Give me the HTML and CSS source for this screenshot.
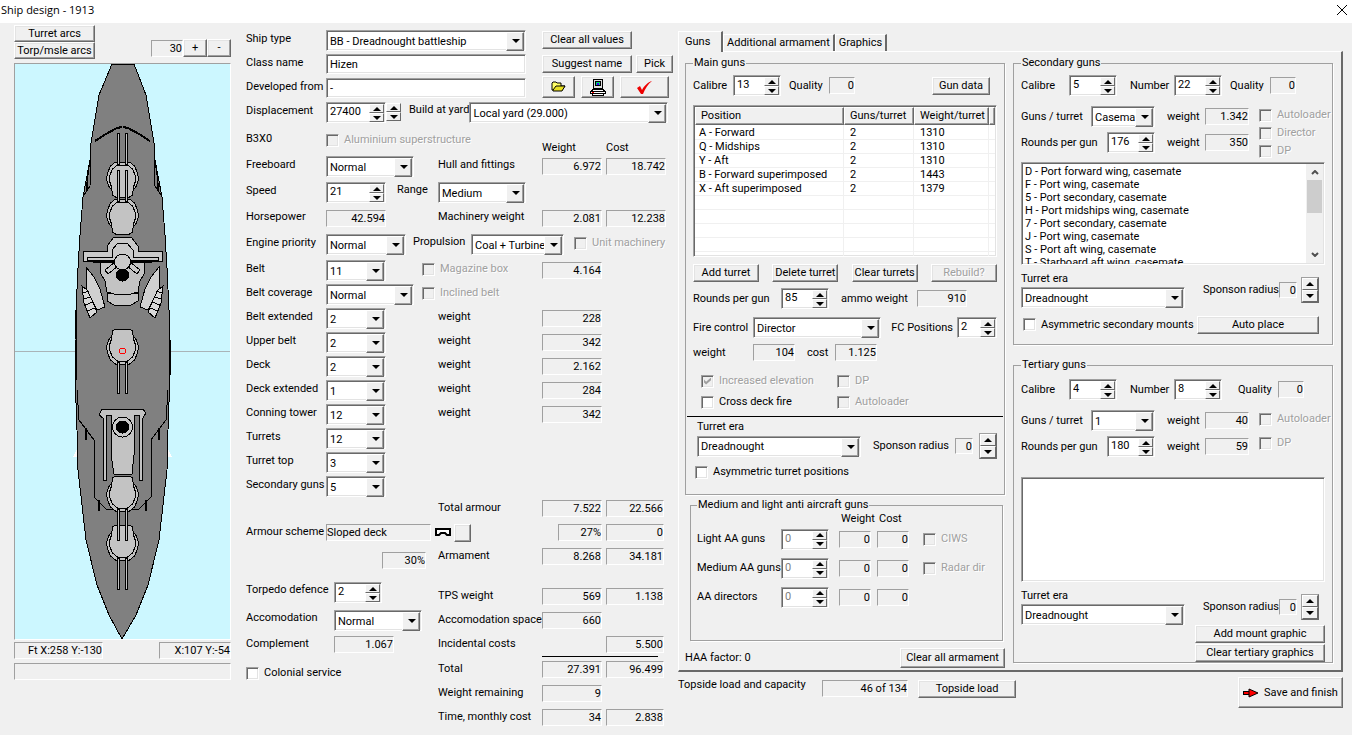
FILE: index.html
```html
<!DOCTYPE html>
<html lang="en">
<head>
    <meta charset="UTF-8">
    <meta name="viewport" content="width=device-width, initial-scale=1.0">
    <title>Ship design - 1913</title>
    <link rel="stylesheet" href="styles.css">
</head>
<body>
    <header class="titlebar">
        <h1>Ship design - 1913</h1>
        <button class="close" aria-label="Close"><svg width="12" height="12" viewBox="0 0 12 12"><path d="M1 1L11 11M11 1L1 11" stroke="#000" fill="none"/></svg></button>
    </header>

    <main class="workspace">
        <!-- Ship drawing -->
        <section class="ship">
            <div class="ship-tools">
                <div class="stack">
                    <button class="btn">Turret arcs</button>
                    <button class="btn">Torp/msle arcs</button>
                </div>
                <div class="zoom">
                    <output class="field">30</output>
                    <button class="btn">+</button>
                    <button class="btn">-</button>
                </div>
            </div>
            <svg class="canvas" viewBox="15 64 215 575" shape-rendering="crispEdges">
                <defs>
                    <g id="turret" stroke="#000" fill="#c3c3c3">
                        <path d="M-7 -13L7 -13L12 -9L15 -2L16 4L14 11L10 16L-10 16L-14 11L-16 4L-15 -2L-12 -9Z"/>
                        <path d="M-5 -10L5 -10L10 -6L13 1L13 6L11 12L10 20L7 22L-7 22L-10 20L-11 12L-13 6L-13 1L-10 -6Z"/>
                        <rect x="-5" y="-42" width="2" height="31"/>
                        <rect x="3" y="-42" width="2" height="31"/>
                    </g>
                    <g id="side" stroke="#000" fill="none">
                        <path d="M95 141L106 134L117 128L122 127" stroke-width="2"/>
                        <path d="M91 143L90 186L84 195M90 160L86 190M88 180L87 190"/>
                        <path d="M80 235L78 268M78 268L76 310M76 310L76 380M77 390L79 420L94 440L94 497L106 509L122 509" />
                        <path d="M86 428V440M99 500V511" stroke-width="2"/>
                        <path d="M86 267L94 277L100 289L105 307L97 310L86 290Z" fill="#d0d0d0"/>
                        <path d="M82 286L87 290L92 300L97 312L90 318L84 303Z" fill="#d8d8d8"/>
                        <path d="M83 293L89 291M83 299L91 297M85 305L93 302M87 311L95 308"/>
                    </g>
                </defs>
                <path d="M15 351H230" stroke="#a9b4b8"/>
                <path d="M73 457L77 449V457ZM172 457L168 449V457Z" fill="#fff"/>
                <path d="M112 64L99 95L91 143L90 160L83 197L80 235L78 268L76 310L75 340L75 375L77 430L78 470L86 540L97 585L109 615L122 639L136 615L148 585L159 540L167 470L168 430L170 375L170 340L169 310L167 268L165 235L162 197L155 160L154 143L146 95L134 64Z" fill="#808080" stroke="#000"/>
                <use href="#side"/>
                <use href="#side" transform="translate(245 0) scale(-1 1)"/>
                <use href="#turret" x="122.500" y="175"/>
                <use href="#turret" x="122.500" y="212"/>
                <g stroke="#000" fill="#cacaca">
                    <path d="M100 261L101 274L105 281L107 292L114 294H131L138 292L140 281L144 274L145 261Z" fill="#c3c3c3"/>
                    <path d="M107 293V301L114 305H131L138 301V293L131 294H114Z" fill="#c3c3c3"/>
                    <path d="M83 251H107V246L114 237H131L138 246V251H162V261H83Z"/>
                    <path d="M87 260V257H112V250L118 243H127L133 250V257H158V260Z"/>
                    <path d="M93 262H152" stroke-width="2"/>
                    <path d="M105 270L115 262L118 266L108 274ZM140 270L130 262L127 266L137 274Z"/>
                    <circle cx="122.500" cy="262" r="8"/>
                    <circle cx="122.500" cy="275" r="6" fill="#000"/>
                    <path d="M102 409H143L146 413L143 418H142V480H139V415H134V455L132 474H114L111 455V415H106V480H103V418L99 415Z" fill="#c3c3c3"/>
                    <circle cx="122.500" cy="427" r="10"/>
                    <circle cx="122.500" cy="427" r="6" fill="#000"/>
                </g>
                <use href="#turret" transform="translate(122.500 351) rotate(180)"/>
                <use href="#turret" transform="translate(122.500 547) rotate(180)"/>
                <use href="#turret" transform="translate(122.500 498) rotate(180)"/>
                <circle cx="122.500" cy="351" r="3" fill="none" stroke="#f00"/>
            </svg>
            <div class="coords">
                <output class="field">Ft X:258 Y:-130</output>
                <output class="field">X:107 Y:-54</output>
            </div>
            <output class="field message"></output>
        </section>

        <!-- General data -->
        <section class="data">
            <div class="specs">
                <label for="type">Ship type</label>
                <span class="combo wide"><select id="type"><option>BB - Dreadnought battleship</option></select></span>
                <div class="side-btns"><button class="btn w90">Clear all values</button></div>

                <label for="name">Class name</label>
                <input class="text wide" id="name" type="text" value="Hizen">
                <div class="side-btns"><button class="btn w90">Suggest name</button><button class="btn pick">Pick</button></div>

                <label for="from">Developed from</label>
                <input class="text wide" id="from" type="text" value="-">
                <div class="side-btns icons">
                    <button class="btn" aria-label="Open"><svg width="16" height="12" viewBox="0 0 16 12"><path d="M1 9V2L2 1H5L6 2H10V5H14L11 9Z" fill="#ffff66" stroke="#000"/><path d="M2 9L5 5H14L11 10H2Z" fill="#e8e020" stroke="#000"/></svg></button>
                    <button class="btn" aria-label="Print"><svg width="16" height="17" viewBox="0 0 16 17" shape-rendering="crispEdges"><path d="M3 0H13V10H3Z"/><path d="M4 1H12V9H4Z" fill="#ddd"/><path d="M5 2H11V7H5Z"/><path d="M6 3H10V6H6Z" fill="#00d070"/><path d="M7 4H9V6H7Z" fill="#40f"/><path d="M2 10H14L16 13V15H14V17H2V15H0V13Z"/><path d="M3 11H13V12H3ZM1 13H15V14H1ZM3 15H13V16H3Z" fill="#fff"/><path d="M2 13H4V14H2Z" fill="#f00"/></svg></button>
                    <button class="btn check" aria-label="Accept"><svg width="17" height="15" viewBox="0 0 17 15"><path d="M1 8L4 6L6 10C8 6 12 2 16 1C12 4 9 9 7 14H5Z" fill="#e00"/></svg></button>
                </div>

                <label for="disp">Displacement</label>
                <div class="line">
                    <span class="spin w60"><input id="disp" type="text" value="27400"><button aria-label="Up"></button><button aria-label="Down"></button></span>
                    <span class="updown"><button aria-label="Up"></button><button aria-label="Down"></button></span>
                    <label for="yard" class="gap8">Build at yard</label>
                    <span class="combo yard"><select id="yard"><option>Local yard (29.000)</option></select></span>
                </div>

                <span>B3X0</span>
                <label class="tick off two"><input type="checkbox" disabled>Aluminium superstructure</label>
                <span class="head">Weight</span><span class="head">Cost</span>

                <label for="free">Freeboard</label>
                <span class="combo w88"><select id="free"><option>Normal</option></select></span>
                <span>Hull and fittings</span><output class="field">6.972</output><output class="field">18.742</output>

                <label for="speed">Speed</label>
                <div class="line">
                    <span class="spin w60"><input id="speed" type="text" value="21"><button aria-label="Up"></button><button aria-label="Down"></button></span>
                    <label for="range" class="range">Range</label>
                    <span class="combo w88"><select id="range"><option>Medium</option></select></span>
                </div>

                <span>Horsepower</span><output class="field w60">42.594</output>
                <span>Machinery weight</span><output class="field">2.081</output><output class="field">12.238</output>

                <label for="engine">Engine priority</label>
                <div class="line">
                    <span class="combo w80"><select id="engine"><option>Normal</option></select></span>
                    <label for="prop" class="prop">Propulsion</label>
                    <span class="combo coal"><select id="prop"><option>Coal + Turbine</option></select></span>
                    <label class="tick off unit"><input type="checkbox" disabled>Unit machinery</label>
                </div>

                <label for="belt">Belt</label>
                <div class="line short">
                    <span class="combo w60"><select id="belt"><option>11</option></select></span>
                    <label class="tick off box"><input type="checkbox" disabled>Magazine box</label>
                </div>
                <output class="field">4.164</output><span></span>

                <label for="cover">Belt coverage</label>
                <div class="line">
                    <span class="combo w88"><select id="cover"><option>Normal</option></select></span>
                    <label class="tick off incl"><input type="checkbox" disabled>Inclined belt</label>
                </div>

                <label for="bext">Belt extended</label>
                <span class="combo w60"><select id="bext"><option>2</option></select></span>
                <span>weight</span><output class="field">228</output><span></span>
                <label for="upper">Upper belt</label>
                <span class="combo w60"><select id="upper"><option>2</option></select></span>
                <span>weight</span><output class="field">342</output><span></span>
                <label for="deck">Deck</label>
                <span class="combo w60"><select id="deck"><option>2</option></select></span>
                <span>weight</span><output class="field">2.162</output><span></span>
                <label for="dext">Deck extended</label>
                <span class="combo w60"><select id="dext"><option>1</option></select></span>
                <span>weight</span><output class="field">284</output><span></span>
                <label for="conn">Conning tower</label>
                <span class="combo w60"><select id="conn"><option>12</option></select></span>
                <span>weight</span><output class="field">342</output><span></span>
                <label for="turrets">Turrets</label>
                <div class="line"><span class="combo w60"><select id="turrets"><option>12</option></select></span></div>
                <label for="ttop">Turret top</label>
                <div class="line"><span class="combo w60"><select id="ttop"><option>3</option></select></span></div>
                <label for="secg">Secondary guns</label>
                <div class="line"><span class="combo w60"><select id="secg"><option>5</option></select></span></div>
            </div>

            <div class="lower">
                <div class="options">
                    <div class="line scheme">
                        <span class="cap">Armour scheme</span>
                        <output class="field left">Sloped deck</output>
                        <svg width="16" height="9" viewBox="0 0 16 9"><path d="M1 1H15V7H12L10 5H6L4 7H1Z" fill="#fff" stroke="#000" stroke-width="2"/></svg>
                        <button class="btn mini" aria-label="Change scheme"></button>
                    </div>
                    <div class="line percent"><output class="field">30%</output></div>
                    <div class="line">
                        <label class="cap88" for="torp">Torpedo defence</label>
                        <span class="spin"><input id="torp" type="text" value="2"><button aria-label="Up"></button><button aria-label="Down"></button></span>
                    </div>
                    <div class="line">
                        <label class="cap88" for="acc">Accomodation</label>
                        <span class="combo w88"><select id="acc"><option>Normal</option></select></span>
                    </div>
                    <div class="line">
                        <span class="cap88">Complement</span>
                        <output class="field w60">1.067</output>
                    </div>
                    <label class="tick"><input type="checkbox">Colonial service</label>
                </div>
                <div class="totals">
                    <div class="ledger">
                        <span>Total armour</span><output class="field">7.522</output><output class="field">22.566</output>
                        <span></span><output class="field narrow">27%</output><output class="field">0</output>
                        <span>Armament</span><output class="field">8.268</output><output class="field">34.181</output>
                        <div class="break"></div>
                        <span>TPS weight</span><output class="field">569</output><output class="field">1.138</output>
                        <span>Accomodation space</span><output class="field">660</output><span></span>
                        <span>Incidental costs</span><span></span><output class="field">5.500</output>
                    </div>
                    <hr>
                    <div class="ledger">
                        <span>Total</span><output class="field">27.391</output><output class="field">96.499</output>
                        <span>Weight remaining</span><output class="field">9</output><span></span>
                        <span>Time, monthly cost</span><output class="field">34</output><output class="field">2.838</output>
                    </div>
                </div>
            </div>
        </section>

        <!-- Armament -->
        <section class="arms">
            <nav class="tabs">
                <button class="tab active">Guns</button><button class="tab">Additional armament</button><button class="tab">Graphics</button>
            </nav>
            <div class="panel">
                <div class="col">
                    <fieldset class="main-guns">
                        <legend>Main guns</legend>
                        <div class="bar">
                            <label for="mcal" class="l40">Calibre</label>
                            <span class="spin"><input id="mcal" type="text" value="13"><button aria-label="Up"></button><button aria-label="Down"></button></span>
                            <span class="l40 gap8">Quality</span>
                            <output class="field w26">0</output>
                            <button class="btn w58 push gun-data">Gun data</button>
                        </div>
                        <div class="list grid-list">
                            <table>
                                <thead><tr><th>Position</th><th>Guns/turret</th><th>Weight/turret</th><th></th></tr></thead>
                                <tbody>
                                    <tr><td>A - Forward</td><td>2</td><td>1310</td><td></td></tr>
                                    <tr><td>Q - Midships</td><td>2</td><td>1310</td><td></td></tr>
                                    <tr><td>Y - Aft</td><td>2</td><td>1310</td><td></td></tr>
                                    <tr><td>B - Forward superimposed</td><td>2</td><td>1443</td><td></td></tr>
                                    <tr><td>X - Aft superimposed</td><td>2</td><td>1379</td><td></td></tr>
                                    <tr><td></td><td></td><td></td><td></td></tr>
                                    <tr><td></td><td></td><td></td><td></td></tr>
                                    <tr><td></td><td></td><td></td><td></td></tr>
                                    <tr><td></td><td></td><td></td><td></td></tr>
                                    <tr><td></td><td></td><td></td><td></td></tr>
                                </tbody>
                            </table>
                        </div>
                        <div class="btn-row">
                            <button class="btn">Add turret</button>
                            <button class="btn">Delete turret</button>
                            <button class="btn">Clear turrets</button>
                            <button class="btn" disabled>Rebuild?</button>
                        </div>
                        <div class="bar">
                            <label for="mrpg" class="l88">Rounds per gun</label>
                            <span class="spin"><input id="mrpg" type="text" value="85"><button aria-label="Up"></button><button aria-label="Down"></button></span>
                            <span class="ammo">ammo weight</span>
                            <output class="field w50">910</output>
                        </div>
                        <div class="bar tall">
                            <label for="fc" class="l60">Fire control</label>
                            <span class="combo w128"><select id="fc"><option>Director</option></select></span>
                            <label for="fcp" class="push">FC Positions</label>
                            <span class="spin w40"><input id="fcp" type="text" value="2"><button aria-label="Up"></button><button aria-label="Down"></button></span>
                        </div>
                        <div class="bar thin">
                            <span class="l60">weight</span><output class="field w42">104</output>
                            <span class="cost">cost</span><output class="field w42">1.125</output>
                        </div>
                        <div class="ticks">
                            <label class="tick off"><input type="checkbox" checked disabled>Increased elevation</label>
                            <label class="tick off"><input type="checkbox" disabled>DP</label>
                            <label class="tick"><input type="checkbox">Cross deck fire</label>
                            <label class="tick off"><input type="checkbox" disabled>Autoloader</label>
                        </div>
                        <hr>
                        <label for="mera" class="era">Turret era</label>
                        <div class="bar sponson">
                            <span class="combo w164"><select id="mera"><option>Dreadnought</option></select></span>
                            <span class="push">Sponson radius</span>
                            <output class="field w18">0</output>
                            <span class="updown big"><button aria-label="Up"></button><button aria-label="Down"></button></span>
                        </div>
                        <label class="tick asym"><input type="checkbox">Asymmetric turret positions</label>
                    </fieldset>

                    <fieldset class="aa">
                        <legend>Medium and light anti aircraft guns</legend>
                        <div class="aa-grid">
                            <span></span><span></span><span class="aa-head">Weight</span><span class="aa-head">Cost</span><span></span>
                            <label for="laa">Light AA guns</label>
                            <span class="spin off"><input id="laa" type="text" value="0" disabled><button aria-label="Up"></button><button aria-label="Down"></button></span>
                            <output class="field">0</output><output class="field">0</output>
                            <label class="tick off"><input type="checkbox" disabled>CIWS</label>
                            <label for="maa">Medium AA guns</label>
                            <span class="spin off"><input id="maa" type="text" value="0" disabled><button aria-label="Up"></button><button aria-label="Down"></button></span>
                            <output class="field">0</output><output class="field">0</output>
                            <label class="tick off"><input type="checkbox" disabled>Radar dir</label>
                            <label for="aad">AA directors</label>
                            <span class="spin off"><input id="aad" type="text" value="0" disabled><button aria-label="Up"></button><button aria-label="Down"></button></span>
                            <output class="field">0</output><output class="field">0</output><span></span>
                        </div>
                    </fieldset>
                    <div class="haa"><span>HAA factor: 0</span><button class="btn">Clear all armament</button></div>
                </div>

                <div class="col">
                    <fieldset class="second">
                        <legend>Secondary guns</legend>
                        <div class="bar">
                            <label for="scal" class="l48">Calibre</label>
                            <span class="spin"><input id="scal" type="text" value="5"><button aria-label="Up"></button><button aria-label="Down"></button></span>
                            <label for="snum" class="num">Number</label>
                            <span class="spin"><input id="snum" type="text" value="22"><button aria-label="Up"></button><button aria-label="Down"></button></span>
                            <span class="l40 gap8">Quality</span>
                            <output class="field w26">0</output>
                        </div>
                        <div class="mounts">
                            <div class="mount-rows">
                                <div class="bar">
                                    <label for="sgt" class="grow">Guns / turret</label>
                                    <span class="combo w64"><select id="sgt"><option>Casemate</option></select></span>
                                    <span class="wt">weight</span><output class="field w44">1.342</output>
                                </div>
                                <div class="bar">
                                    <label for="srpg" class="grow">Rounds per gun</label>
                                    <span class="spin"><input id="srpg" type="text" value="176"><button aria-label="Up"></button><button aria-label="Down"></button></span>
                                    <span class="wt">weight</span><output class="field w44">350</output>
                                </div>
                            </div>
                            <div class="mount-ticks">
                                <label class="tick off"><input type="checkbox" disabled>Autoloader</label>
                                <label class="tick off"><input type="checkbox" disabled>Director</label>
                                <label class="tick off"><input type="checkbox" disabled>DP</label>
                            </div>
                        </div>
                        <div class="list mount-list">
                            <ul>
                                <li>D - Port forward wing, casemate</li>
                                <li>F - Port wing, casemate</li>
                                <li>5 - Port secondary, casemate</li>
                                <li>H - Port midships wing, casemate</li>
                                <li>7 - Port secondary, casemate</li>
                                <li>J - Port wing, casemate</li>
                                <li>S - Port aft wing, casemate</li>
                                <li>T - Starboard aft wing, casemate</li>
                            </ul>
                            <div class="scroll">
                                <svg width="8" height="5" viewBox="0 0 8 5"><path d="M1 4L4 1L7 4" fill="none" stroke="#505050" stroke-width="2"/></svg>
                                <div class="thumb"></div>
                                <svg width="8" height="5" viewBox="0 0 8 5"><path d="M1 1L4 4L7 1" fill="none" stroke="#505050" stroke-width="2"/></svg>
                            </div>
                        </div>
                        <div class="mount-foot">
                            <div class="era-box">
                                <label for="sera">Turret era</label>
                                <span class="combo w164"><select id="sera"><option>Dreadnought</option></select></span>
                            </div>
                            <div class="radius">
                                <span>Sponson radius</span><output class="field w18">0</output>
                                <span class="updown big"><button aria-label="Up"></button><button aria-label="Down"></button></span>
                            </div>
                        </div>
                        <div class="bar last">
                            <label class="tick"><input type="checkbox">Asymmetric secondary mounts</label>
                            <button class="btn push w122">Auto place</button>
                        </div>
                    </fieldset>

                    <fieldset class="third">
                        <legend>Tertiary guns</legend>
                        <div class="bar">
                            <label for="tcal" class="l48">Calibre</label>
                            <span class="spin"><input id="tcal" type="text" value="4"><button aria-label="Up"></button><button aria-label="Down"></button></span>
                            <label for="tnum" class="num">Number</label>
                            <span class="spin"><input id="tnum" type="text" value="8"><button aria-label="Up"></button><button aria-label="Down"></button></span>
                            <span class="l40 gap16">Quality</span>
                            <output class="field w26">0</output>
                        </div>
                        <div class="mounts">
                            <div class="mount-rows">
                                <div class="bar">
                                    <label for="tgt" class="grow">Guns / turret</label>
                                    <span class="combo w64"><select id="tgt"><option>1</option></select></span>
                                    <span class="wt">weight</span><output class="field w44">40</output>
                                </div>
                                <div class="bar">
                                    <label for="trpg" class="grow">Rounds per gun</label>
                                    <span class="spin"><input id="trpg" type="text" value="180"><button aria-label="Up"></button><button aria-label="Down"></button></span>
                                    <span class="wt">weight</span><output class="field w44">59</output>
                                </div>
                            </div>
                            <div class="mount-ticks two-ticks">
                                <label class="tick off"><input type="checkbox" disabled>Autoloader</label>
                                <label class="tick off"><input type="checkbox" disabled>DP</label>
                            </div>
                        </div>
                        <div class="list mount-list"></div>
                        <div class="mount-foot">
                            <div class="era-box">
                                <label for="tera">Turret era</label>
                                <span class="combo w164"><select id="tera"><option>Dreadnought</option></select></span>
                            </div>
                            <div class="radius">
                                <span>Sponson radius</span><output class="field w18">0</output>
                                <span class="updown big"><button aria-label="Up"></button><button aria-label="Down"></button></span>
                            </div>
                        </div>
                        <div class="graphic-btns">
                            <button class="btn">Add mount graphic</button>
                            <button class="btn">Clear tertiary graphics</button>
                        </div>
                    </fieldset>
                </div>
            </div>
            <footer class="foot">
                <span class="topside">Topside load and capacity</span>
                <output class="field w86">46 of 134</output>
                <button class="btn w98">Topside load</button>
                <button class="btn save"><svg width="16" height="10" viewBox="0 0 16 10"><path d="M0 5H7" stroke="#000" stroke-width="4"/><path d="M1 5H8" stroke="#f00" stroke-width="2"/><path d="M6 1L15 5L6 9Z" fill="#f00" stroke="#000"/></svg>Save and finish</button>
            </footer>
        </section>
    </main>
</body>
</html>
```
FILE: styles.css
```css
* {
    box-sizing: border-box;
}
body {
    margin: 0;
    background: #f0f0f0;
    color: #000;
    font: 11px/16px Roboto, "Liberation Sans", sans-serif;
}
input, select, button {
    font: inherit;
    color: inherit;
    margin: 0;
    padding: 0;
    border: 0;
    border-radius: 0;
    outline: none;
}
span, label {
    white-space: nowrap;
}

.titlebar {
    display: flex;
    justify-content: space-between;
    align-items: center;
    height: 23px;
    padding: 0 4px 0 1px;
    background: #fff;
}
.titlebar h1 {
    margin: 0;
    font: 11px/20px "Open Sans", sans-serif;
    align-self: flex-start;
}
.close {
    display: flex;
    margin-top: -4px;
    background: none;
}
.workspace {
    display: flex;
    padding: 0 9px 0 14px;
}

/* shared controls */
.btn {
    height: 18px;
    background: #f0f0f0;
    border: 1px solid;
    border-color: #fff #696969 #696969 #fff;
    box-shadow: inset -1px -1px #a0a0a0, inset 1px 1px #e3e3e3;
    line-height: 14px;
    white-space: nowrap;
}
.btn:disabled {
    color: #a0a0a0;
    text-shadow: 1px 1px #fff;
}
.field {
    display: block;
    height: 17px;
    border: 1px solid;
    border-color: #a0a0a0 #fff #fff #a0a0a0;
    line-height: 16px;
    text-align: right;
    white-space: nowrap;
}
.text, .combo, .spin, .list {
    background: #fff;
    border: 1px solid;
    border-color: #a0a0a0 #fff #fff #a0a0a0;
    box-shadow: inset 1px 1px #696969, inset -1px -1px #e3e3e3;
}
.text {
    height: 20px;
    padding: 0 3px;
}
.combo {
    position: relative;
    display: block;
    flex: none;
    height: 21px;
}
.combo select {
    width: 100%;
    height: 19px;
    padding: 2px 16px 0 3px;
    background: none;
    appearance: none;
}
.combo::before {
    content: "";
    position: absolute;
    top: 1px;
    right: 1px;
    width: 16px;
    height: 17px;
    background: #f0f0f0;
    border: 1px solid;
    border-color: #fff #696969 #696969 #fff;
    box-shadow: inset -1px -1px #a0a0a0;
    pointer-events: none;
}
.combo::after {
    content: "";
    position: absolute;
    top: 8px;
    right: 5px;
    border: 4px solid transparent;
    border-top-color: #000;
    border-bottom: 0;
    pointer-events: none;
}
.spin {
    display: grid;
    grid-template: 9px 9px / 1fr 15px;
    flex: none;
    width: 48px;
    height: 21px;
    padding: 1px;
}
.spin input {
    grid-row: 1 / 3;
    min-width: 0;
    width: 100%;
    padding: 0 0 2px 2px;
    background: none;
}
.spin.off input {
    color: #808080;
}
.spin button, .updown button {
    display: flex;
    align-items: center;
    justify-content: center;
    background: #f0f0f0;
    border: 1px solid;
    border-color: #fff #696969 #696969 #fff;
}
.spin button::before, .updown button::before {
    content: "";
    border: 4px solid transparent;
    border-top: 0;
    border-bottom-color: #000;
}
.spin button:last-child::before, .updown button:last-child::before {
    border-top: 4px solid #000;
    border-bottom: 0;
}
.updown {
    display: grid;
    flex: none;
    width: 15px;
    height: 18px;
}
.updown.big {
    width: 18px;
    height: 26px;
    border: 1px solid;
    border-color: #a0a0a0 #696969 #696969 #a0a0a0;
}
.tick {
    display: flex;
    align-items: center;
    gap: 5px;
    height: 18px;
}
.tick input {
    position: relative;
    flex: none;
    width: 13px;
    height: 13px;
    background: #fff;
    border: 1px solid;
    border-color: #a0a0a0 #fff #fff #a0a0a0;
    box-shadow: inset 1px 1px #696969, inset -1px -1px #e3e3e3;
    appearance: none;
}
.tick.off {
    color: #a0a0a0;
    text-shadow: 1px 1px #fff;
}
.tick.off input {
    background: #f0f0f0;
}
.tick input:checked::before {
    content: "";
    position: absolute;
    top: 2px;
    left: 2px;
    width: 7px;
    height: 7px;
    background: #a0a0a0;
    clip-path: polygon(0 30%, 30% 60%, 100% 0, 100% 40%, 30% 100%, 0 70%);
}
.w18 { width: 18px; }
.w26 { width: 26px; }
.spin.w40 { width: 40px; }
.w42 { width: 42px; }
.w44 { width: 44px; }
.w50 { width: 50px; }
.w58 { width: 58px; }
.w60, .spin.w60 { width: 60px; }
.w64 { width: 64px; }
.w80 { width: 80px; }
.w86 { width: 86px; }
.w88 { width: 88px; }
.w90 { width: 90px; }
.w98 { width: 98px; }
.w122 { width: 122px; }
.w128 { width: 128px; }
.w164 { width: 164px; }
.l40 { width: 40px; }
.l48 { width: 48px; }
.l60 { width: 60px; }
.l88 { width: 88px; }
.push { margin-left: auto; }
.gap8 { margin-left: 8px; }
.gap16 { margin-left: 16px; }
hr {
    width: auto;
    height: 1px;
    margin: 0;
    border: 0;
    background: #000;
}

/* ship */
.ship {
    flex: none;
    width: 217px;
    padding-top: 2px;
}
.ship-tools {
    display: flex;
    justify-content: space-between;
    align-items: center;
    height: 34px;
}
.stack {
    display: grid;
    width: 81px;
}
.stack .btn {
    height: 17px;
}
.zoom {
    display: flex;
    align-items: center;
    padding-top: 12px;
}
.zoom .field {
    width: 32px;
}
.zoom .btn {
    width: 24px;
}
.canvas {
    display: block;
    width: 217px;
    height: 577px;
    margin-top: 4px;
    background: #ccf7ff;
    border: 1px solid;
    border-color: #a0a0a0 #fff #fff #a0a0a0;
}
.coords {
    display: flex;
    justify-content: space-between;
    margin: 2px 0 4px;
}
.coords .field:first-child {
    width: 89px;
}
.coords .field:last-child {
    width: 72px;
}

/* general data */
.data {
    flex: none;
    width: 422px;
    margin-left: 15px;
    padding-top: 7px;
}
.specs {
    display: grid;
    grid-template-columns: 80px 112px 104px 64px 62px;
    grid-template-rows: repeat(3, 24px) 28px repeat(5, 26px) repeat(10, 24px);
    align-items: start;
}
.specs > label, .specs > span {
    margin-top: 1px;
}
.specs > .combo {
    margin-top: 0;
}
.specs > .field {
    width: 60px;
    margin-top: 2px;
}
.specs > .wide {
    grid-column: 2 / 4;
    width: 200px;
}
.side-btns {
    grid-column: 4 / 6;
    display: flex;
    gap: 4px;
    margin-top: 1px;
}
.side-btns .btn {
    flex: none;
}
.pick {
    width: 37px;
}
.side-btns.icons {
    gap: 6px;
    margin-top: -2px;
}
.icons .btn {
    display: flex;
    align-items: center;
    justify-content: center;
    width: 33px;
    height: 22px;
}
.icons .check {
    width: 49px;
}
.line {
    display: flex;
    align-items: flex-start;
}
.line > label {
    flex: none;
}
.specs .line {
    grid-column: 2 / 6;
}
.specs .short {
    grid-column: 2 / 4;
}
.specs .line .updown {
    margin-top: 1px;
}
.yard {
    width: 199px;
    margin-left: auto;
}
.two {
    grid-column: 2 / 4;
}
.head {
    align-self: end;
}
.range {
    width: 52px;
    padding-left: 11px;
}
.prop {
    width: 65px;
    padding-left: 7px;
}
.coal {
    width: 93px;
}
.unit {
    margin-left: 10px;
}
.box {
    margin-left: 36px;
}
.incl {
    margin-left: 8px;
}
.lower {
    display: flex;
}
.options {
    display: grid;
    align-content: start;
    grid-template-rows: 28px 30px 28px 26px 28px 18px;
    align-items: start;
    flex: none;
    width: 192px;
    padding-top: 24px;
}
.scheme {
    width: 226px;
}
.scheme svg {
    margin: 4px 3px 0 4px;
}
.scheme .field {
    width: 105px;
}
.scheme .mini {
    width: 17px;
}
.field.left {
    text-align: left;
}
.cap {
    width: 80px;
}
.cap88 {
    width: 88px;
}
.percent .field {
    width: 44px;
    margin-left: 136px;
}
.ledger {
    display: grid;
    grid-template-columns: 100px 60px 58px;
    column-gap: 4px;
    align-content: start;
    row-gap: 7px;
}
.ledger > span {
    height: 17px;
}
.ledger .narrow {
    justify-self: end;
    width: 44px;
}
.break {
    grid-column: 1 / 4;
    height: 9px;
}
.totals hr {
    margin: 3px 6px 4px 104px;
}

/* armament */
.arms {
    flex: 1;
    min-width: 0;
    margin-left: 10px;
    padding-top: 8px;
}
.tabs {
    display: flex;
    align-items: flex-end;
    height: 20px;
}
.tab {
    height: 17px;
    padding: 0 3px;
    background: #f0f0f0;
    border: solid;
    border-width: 1px 2px 0 1px;
    border-color: #fff #696969 #fff #fff;
    line-height: 16px;
}
.tab.active {
    position: relative;
    height: 21px;
    width: 45px;
    margin-bottom: -1px;
    padding: 0 8px 0 6px;
    text-align: left;
}
.panel {
    display: grid;
    grid-template-columns: 1fr 1fr;
    column-gap: 8px;
    padding: 3px 8px 2px 6px;
    border: solid;
    border-width: 1px 2px 2px 1px;
    border-color: #fff #696969 #696969 #fff;
}
fieldset {
    min-width: 0;
    margin: 0;
    padding: 4px 7px 0;
    border: 1px solid #a0a0a0;
    box-shadow: 1px 1px #fff;
}
legend {
    padding: 0 1px;
    background: #f0f0f0;
}
.main-guns {
    height: 440px;
}
.bar {
    display: flex;
    align-items: center;
    height: 21px;
}
.gun-data {
    margin-right: 7px;
}
.list {
    overflow: hidden;
    padding: 1px;
}
.grid-list {
    height: 152px;
    margin: 9px 0 7px;
}
.grid-list table {
    width: 100%;
    table-layout: fixed;
    border-collapse: separate;
    border-spacing: 0;
}
.grid-list th {
    height: 17px;
    padding: 0 0 0 5px;
    background: #f0f0f0;
    border: 1px solid;
    border-color: #fff #696969 #696969 #fff;
    box-shadow: inset -1px -1px #a0a0a0;
    font-weight: normal;
    text-align: left;
    white-space: nowrap;
}
.grid-list th:nth-child(2) {
    width: 70px;
}
.grid-list th:nth-child(3) {
    width: 75px;
}
.grid-list th:nth-child(4) {
    width: 6px;
    padding: 0;
}
.grid-list td {
    height: 14px;
    padding: 0 0 0 6px;
    border: solid #f0f0f0;
    border-width: 0 1px 1px 0;
    line-height: 13px;
    white-space: nowrap;
}
.grid-list td:first-child {
    padding-left: 4px;
}
.grid-list tbody tr:first-child td {
    height: 15px;
    padding-top: 1px;
}
.grid-list td:last-child {
    padding: 0;
    border-right: 0;
}
.btn-row {
    display: flex;
    justify-content: space-between;
    margin-bottom: 6px;
}
.btn-row .btn {
    width: 66px;
}
.ammo {
    width: 88px;
    padding-left: 12px;
}
.bar.tall {
    margin: 8px 0 6px;
}
.tall .spin {
    margin-left: 4px;
}
.thin {
    height: 17px;
}
.cost {
    width: 40px;
    padding-left: 12px;
}
.ticks {
    display: grid;
    grid-template-columns: 136px 1fr;
    row-gap: 3px;
    padding: 11px 0 5px 8px;
}
.main-guns hr {
    margin: 0 -6px 2px;
}
.era {
    display: block;
    padding-left: 4px;
}
.sponson {
    height: 26px;
    padding-left: 4px;
    margin-top: -2px;
}
.sponson .field, .radius .field {
    margin: 0 6px;
    height: 16px;
}
.asym {
    margin-top: 4px;
    padding-left: 2px;
}
.aa {
    height: 144px;
    margin: 2px 2px 0 5px;
    padding: 0 6px;
}
.aa-grid {
    display: grid;
    grid-template-columns: 84px 58px 38px 46px 1fr;
    grid-template-rows: 12px 28px 30px 28px;
    align-items: center;
}
.aa-grid .field {
    width: 32px;
}
.aa-head {
    padding-left: 2px;
}
.haa {
    display: flex;
    justify-content: space-between;
    align-items: center;
    margin-top: 7px;
}
.haa .btn {
    width: 105px;
    height: 20px;
}
.second {
    height: 290px;
}
.num {
    width: 57px;
    padding-left: 13px;
}
.mounts {
    display: flex;
    justify-content: space-between;
    margin-top: 10px;
}
.mount-rows {
    display: grid;
    align-content: start;
    gap: 5px;
    width: 228px;
}
.grow {
    flex: 1;
}
.wt {
    width: 50px;
    padding-left: 12px;
}
.mount-ticks {
    width: 66px;
}
.two-ticks {
    display: grid;
    gap: 6px;
    align-content: start;
}
.mount-list {
    display: flex;
    height: 103px;
    margin-top: 2px;
}
.mount-list ul {
    flex: 1;
    margin: 0;
    padding: 1px 2px;
    list-style: none;
    line-height: 13px;
}
.scroll {
    display: flex;
    flex-direction: column;
    align-items: center;
    width: 17px;
    padding: 6px 0;
    background: #f0f0f0;
}
.thumb {
    width: 15px;
    height: 33px;
    margin: 5px 0 auto;
    background: #cdcdcd;
}
.mount-foot {
    display: flex;
    justify-content: space-between;
    align-items: center;
    padding: 6px 6px 0 0;
}
.era-box label {
    display: block;
}
.radius {
    display: flex;
    align-items: center;
}
.radius .field {
    margin: 0 4px 0 0;
}
.last {
    margin-top: 6px;
    padding: 0 6px 0 2px;
}
.third {
    height: 306px;
    margin-top: 12px;
    padding-top: 6px;
}
.third .mount-list {
    height: 105px;
    margin-top: 20px;
}
.graphic-btns {
    display: grid;
    gap: 1px;
    justify-content: end;
}
.graphic-btns .btn {
    width: 130px;
}
.foot {
    display: flex;
    align-items: flex-start;
    padding-top: 5px;
}
.foot .field, .foot .w98 {
    margin-top: 3px;
}
.topside {
    width: 144px;
}
.w98 {
    margin-left: 10px;
}
.save {
    display: flex;
    align-items: center;
    justify-content: center;
    gap: 5px;
    width: 105px;
    height: 31px;
    margin-left: auto;
}
```
